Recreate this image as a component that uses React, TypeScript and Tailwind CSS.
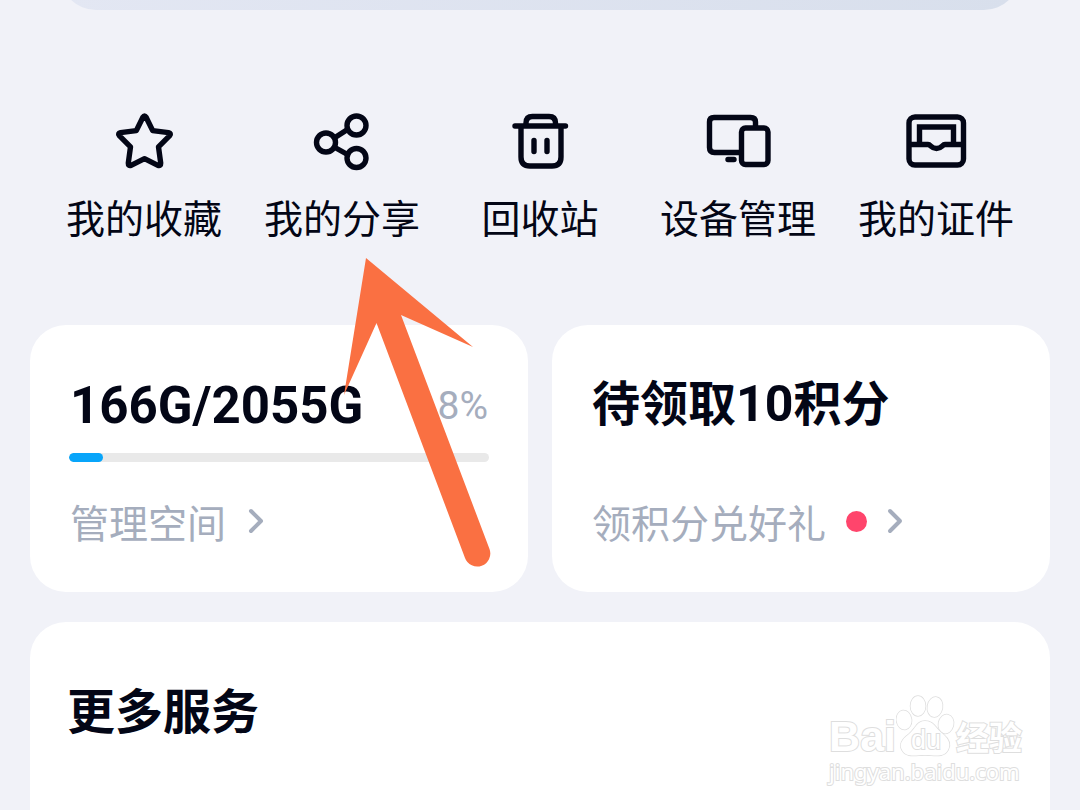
import type { ReactNode } from "react";

function Icon({ children }: { children: ReactNode }) {
  return (
    <svg
      viewBox="0 0 72 60"
      className="h-[60px] w-[72px]"
      fill="none"
      stroke="currentColor"
      strokeWidth="5.4"
      strokeLinecap="round"
      strokeLinejoin="round"
      aria-hidden="true"
    >
      {children}
    </svg>
  );
}

const shortcuts: { label: string; icon: ReactNode }[] = [
  {
    label: "我的收藏",
    icon: (
      <path d="M34.9 5.2Q36.5 2.6 38.1 5.2L44.7 18.6L60.5 20.6Q63.5 21.3 61.7 23.6L50.5 34.8L52.7 51Q52.8 54.3 49.9 53.4L36.5 46.7L23.1 53.4Q20.2 54.3 20.3 51L22.5 34.8L11.3 23.6Q9.5 21.3 12.5 20.6L28.3 18.6Z" />
    ),
  },
  {
    label: "我的分享",
    icon: (
      <>
        <circle cx="20" cy="30.5" r="9.5" />
        <circle cx="50.5" cy="13.5" r="9.5" />
        <circle cx="50.5" cy="46" r="9.5" />
        <path d="M29 25.5 41.5 17.5M29 35.5 41.5 42.5" />
      </>
    ),
  },
  {
    label: "回收站",
    icon: (
      <path d="M11 14H61.5M22 13V11Q22 4.5 28.5 4.5H45Q51.5 4.5 51.5 11V13M17 14V45Q17 54 26 54H48Q57 54 57 45V14M30 28.5V39.500M43 28.5V39.500" />
    ),
  },
  {
    label: "设备管理",
    icon: (
      <>
        <path d="M53.5 15V10Q53.5 5.500 48.5 5.500H12Q7.500 5.500 7.500 10V35.5Q7.500 40.5 12.5 40.5H39M26 47.5H32" />
        <rect x="39.5" y="16" width="26.5" height="36.5" rx="4" />
      </>
    ),
  },
  {
    label: "我的证件",
    icon: (
      <>
        <rect x="9" y="5" width="54.5" height="48" rx="6" />
        <path
          d="M10 32.5H28C31 32.5 31 36.5 36.5 36.5S42 32.5 45 32.5H62M19.5 31V15H53.5V31"
          strokeLinejoin="miter"
          strokeLinecap="butt"
        />
      </>
    ),
  },
];

function Chevron() {
  return (
    <svg
      viewBox="0 0 16 26"
      className="h-[26px] w-4"
      fill="none"
      stroke="currentColor"
      strokeWidth="4"
      strokeLinecap="round"
      strokeLinejoin="round"
      aria-hidden="true"
    >
      <path d="M3 3 13 13 3 23" />
    </svg>
  );
}

function Arrow() {
  return (
    <svg
      viewBox="0 0 150 312"
      className="pointer-events-none absolute left-[343px] top-[257px] h-[312px] w-[150px]"
      fill="#fa7042"
      aria-hidden="true"
    >
      <path d="M23 1 130 90 58 58 146.5 292A13 13 0 0 1 122 301L33.5 66 1 138Z" />
    </svg>
  );
}

function Watermark() {
  return (
    <div className="absolute right-7 top-[70px] text-white [-webkit-text-stroke:2px_#dedede] [paint-order:stroke_fill]">
      <div className="flex items-end">
        <span className="font-['Liberation_Sans'] text-[43px] font-bold leading-[44px]">Bai</span>
        <span className="relative h-[66px] w-[60px]">
          <svg
            viewBox="0 0 60 66"
            className="h-[66px] w-[60px]"
            fill="#fff"
            stroke="#dedede"
            strokeWidth="1.5"
            aria-hidden="true"
          >
            <ellipse cx="8" cy="28" rx="7.5" ry="9.5" transform="rotate(-8 8 28)" />
            <ellipse cx="22" cy="14" rx="7.5" ry="10" />
            <ellipse cx="39" cy="15" rx="7.5" ry="10" transform="rotate(10 39 15)" />
            <ellipse cx="50" cy="32" rx="7.5" ry="9.5" transform="rotate(12 50 32)" />
            <path d="M29 29C21 29 20 36 13 42C5 48 3 53 6 58C10 66 20 63 29 63C38 63 48 66 52 58C55 53 53 47 47 42C39 36 38 29 29 29Z" />
          </svg>
          <span className="absolute inset-x-0 bottom-1 text-center font-['Liberation_Sans'] text-[27px] leading-7">
            du
          </span>
        </span>
        <span className="text-[33px] font-bold leading-[44px]">经验</span>
      </div>
      <div className="-mt-px font-['Noto_Sans'] text-[22px] leading-7">jingyan.baidu.com</div>
    </div>
  );
}

export default function App() {
  return (
    <main className="relative flex min-h-screen flex-col overflow-hidden bg-[#f1f2f8] font-['Noto_Sans_CJK_SC',sans-serif] text-[#030616]">
      <div className="mx-[60px] -mt-10 h-[50px] rounded-b-[36px] bg-linear-to-r from-[#e3e7f3] to-[#d8dfec]" />

      <nav className="mx-[45px] mt-[102px] grid grid-cols-5">
        {shortcuts.map((item) => (
          <a key={item.label} href="#" className="flex flex-col items-center gap-4 whitespace-nowrap">
            <Icon>{item.icon}</Icon>
            <span className="text-[39px] leading-[56px]">{item.label}</span>
          </a>
        ))}
      </nav>

      <div className="mx-[30px] mt-[81px] grid grid-cols-2 gap-6">
        <section className="rounded-[36px] bg-white px-10 pb-[43px] pt-[50px]">
          <div className="flex items-center justify-between">
            <h2 className="font-['Roboto'] text-[51px] font-bold leading-[62px]">166G/2055G</h2>
            <span className="font-['Roboto'] text-[39px] leading-[62px] text-[#a5adbd]">8%</span>
          </div>
          <div
            role="progressbar"
            aria-label="166G/2055G"
            aria-valuenow={8}
            className="-mx-px mt-4 h-[9px] overflow-hidden rounded-full bg-[#e9e9e9]"
          >
            <div className="h-full w-[8%] rounded-full bg-[#08a5fa]" />
          </div>
          <a href="#" className="mt-[31px] flex items-center gap-[22px] text-[39px] leading-[56px] text-[#a5adbd]">
            管理空间
            <Chevron />
          </a>
        </section>

        <section className="flex flex-col justify-between rounded-[36px] bg-white px-10 pb-[43px] pt-[46px]">
          <h2 className="text-[48px] font-bold leading-[58px]">
            待领取<span className="font-['Roboto'] text-[50px] leading-none">10</span>积分
          </h2>
          <a href="#" className="flex items-center text-[39px] leading-[56px] text-[#a5adbd]">
            领积分兑好礼
            <span className="mx-5 size-[21px] rounded-full bg-[#ff456c]" />
            <Chevron />
          </a>
        </section>
      </div>

      <section className="relative mx-[30px] mt-[30px] grow rounded-t-[36px] bg-white px-[37px] pt-[57px]">
        <h2 className="text-[48px] font-bold leading-[58px]">更多服务</h2>
        <Watermark />
      </section>

      <Arrow />
    </main>
  );
}
